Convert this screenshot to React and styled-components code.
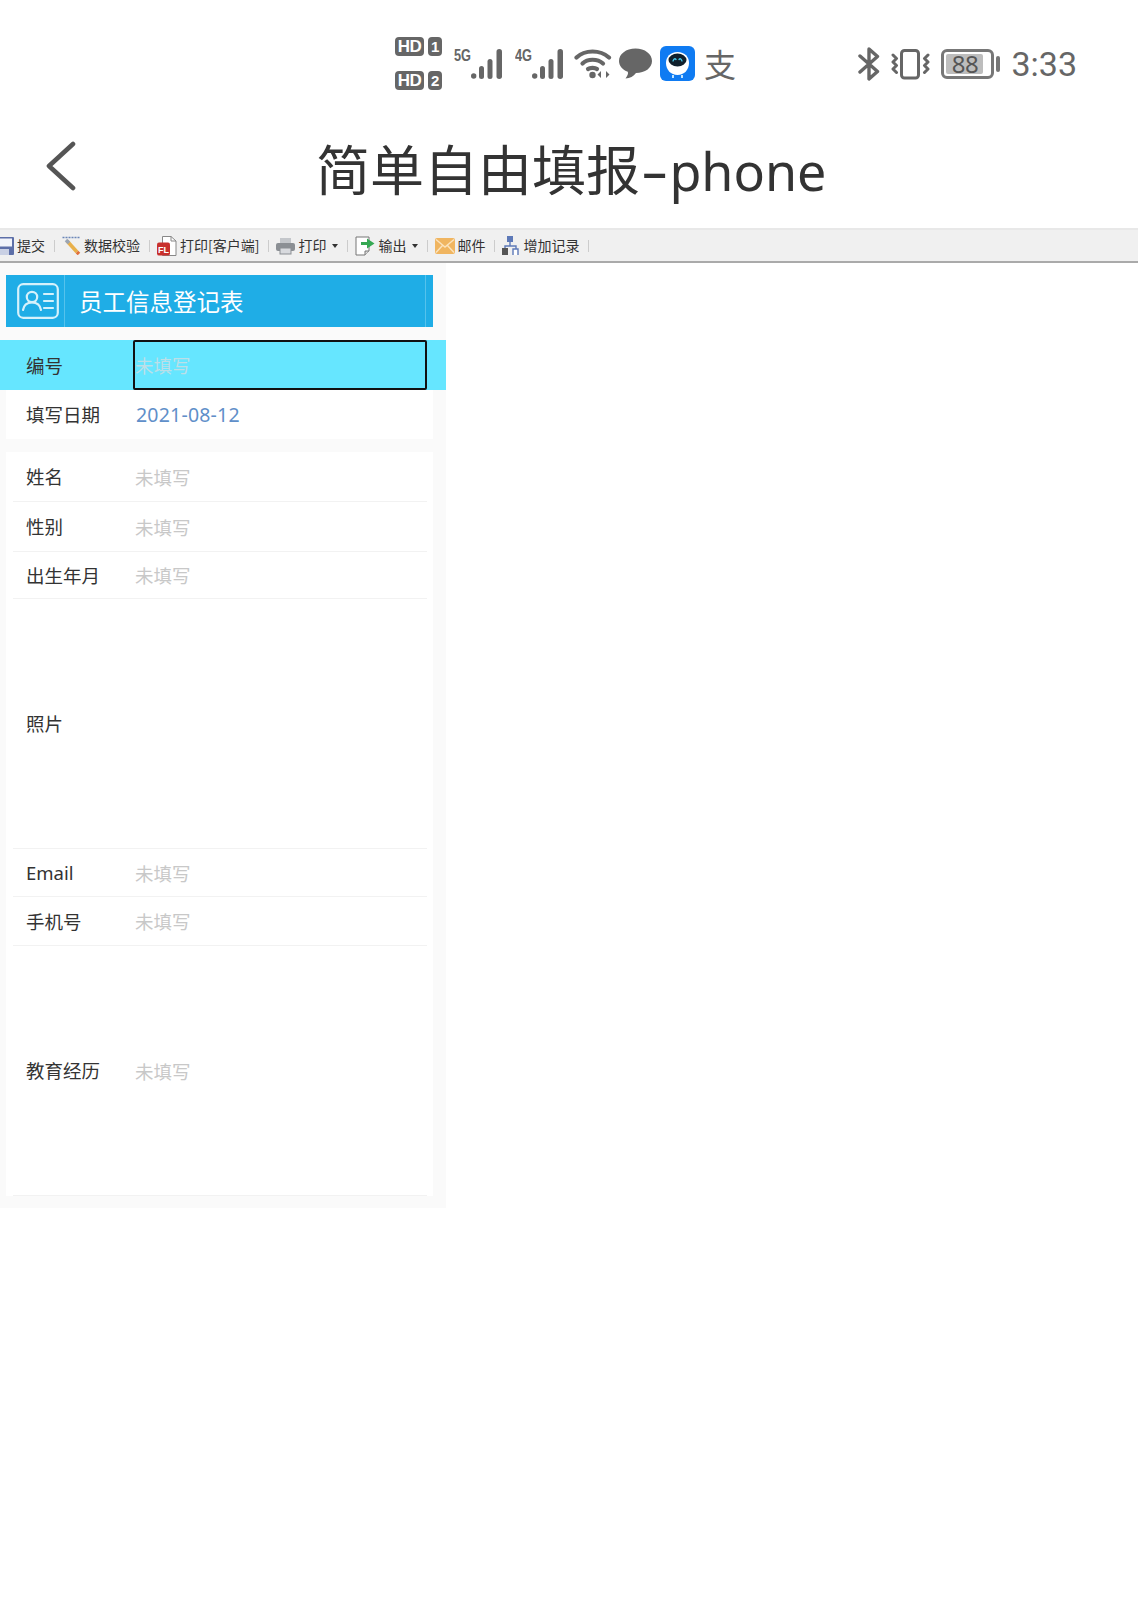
import styled, { createGlobalStyle } from 'styled-components'

const GlobalStyle = createGlobalStyle`
  html, body { margin: 0; padding: 0; background: #fff; }
  body { font-family: 'Noto Sans', 'Noto Sans CJK SC', sans-serif; }
  * { box-sizing: border-box; }
`

const Bars = () => (
  <svg width="33" height="31" viewBox="0 0 33 31" fill="#666">
    <circle cx="2.7" cy="28" r="2.7" />
    <rect x="8" y="18" width="5" height="13" rx="2.5" />
    <rect x="16.5" y="11" width="5" height="20" rx="2.5" />
    <rect x="25.5" y="1" width="5.5" height="30" rx="2.7" />
  </svg>
)

const Wifi = () => (
  <svg width="38" height="31" viewBox="0 0 38 31" fill="none" stroke="#666" strokeWidth="4.2" strokeLinecap="round">
    <path d="M2.5 9.5 C11 1.5 26 1.5 35 9.5" />
    <path d="M8.5 15.5 C13.5 10.5 23.5 10.5 29 15.5" />
    <path d="M14 21 C16 19.4 21 19.4 23 21" />
    <circle cx="18.5" cy="27" r="3.2" fill="#666" stroke="none" />
    <path d="M27 23 L27 30 L23.5 26.5 Z M32 23 L32 30 L35.5 26.5 Z" fill="#666" stroke="none" />
  </svg>
)

const Bubble = () => (
  <svg width="33" height="31" viewBox="0 0 33 31" fill="#666">
    <path d="M16.5 0.5 C26 0.5 33 6 33 13 C33 20 26 25 17 25 C14.5 28 11 30.5 6.5 30.5 C8.5 28 9.5 25.5 8.8 23.8 C3.5 21.8 0 18 0 13 C0 6 7 0.5 16.5 0.5 Z" />
  </svg>
)

const RobotApp = () => (
  <svg width="35" height="35" viewBox="0 0 35 35">
    <rect width="35" height="35" rx="6" fill="#0f7bf2" />
    <path d="M17.5 6 C25 6 29 11 29 17 C29 24 24 29 17.5 29 C11 29 6 24 6 17 C6 11 10 6 17.5 6 Z" fill="#fff" />
    <ellipse cx="17.5" cy="14" rx="9" ry="6.5" fill="#10202c" />
    <path d="M13 15 Q14.5 11.5 16 13.5 M19 13.5 Q20.5 11.5 22 15" fill="none" stroke="#46c8e8" strokeWidth="1.3" strokeLinecap="round" />
    <rect x="12" y="29" width="2" height="3" fill="#bfe3ff" />
    <rect x="21" y="29" width="2" height="3" fill="#bfe3ff" />
  </svg>
)

const Bluetooth = () => (
  <svg width="22" height="34" viewBox="0 0 22 34" fill="none" stroke="#666" strokeWidth="3.4" strokeLinejoin="round" strokeLinecap="round">
    <path d="M2 9 L19.5 24.5 L11 32 L11 2 L19.5 9.5 L2 25" />
  </svg>
)

const Vibrate = () => (
  <svg width="39" height="31" viewBox="0 0 39 31" fill="none" stroke="#666" strokeWidth="3" strokeLinecap="round" strokeLinejoin="round">
    <rect x="10.5" y="1.5" width="17" height="27.5" rx="3" />
    <path d="M2 6 L5.5 9.5 L2 13 L5.5 16.5 L2 20 L5.5 23.5" />
    <path d="M37 6 L33.5 9.5 L37 13 L33.5 16.5 L37 20 L33.5 23.5" />
  </svg>
)

const SaveIcon = () => (
  <svg width="14" height="18" viewBox="0 0 14 18">
    <rect x="-4" y="0" width="18" height="18" rx="1" fill="#5d6fa8" />
    <rect x="-2" y="1.5" width="14" height="8" fill="#f2f4fa" />
    <rect x="0" y="12" width="9" height="6" fill="#c9d0e4" />
  </svg>
)

const WandIcon = () => (
  <svg width="19" height="19" viewBox="0 0 19 19">
    <path d="M0.5 1.5 H18" stroke="#6b86b8" strokeWidth="1.6" strokeDasharray="2 1" />
    <path d="M5 5 L15 16" stroke="#e8b04a" strokeWidth="3.6" />
    <path d="M4 4 L7 7" stroke="#9aa5b5" strokeWidth="3.6" />
    <path d="M15 16 L17 18" stroke="#e0703a" strokeWidth="3.6" />
  </svg>
)

const FlIcon = () => (
  <svg width="20" height="20" viewBox="0 0 20 20">
    <path d="M5.5 0.5 H14 L19 5 V19.5 H5.5 Z" fill="#fff" stroke="#888" />
    <path d="M14 0.5 V5 H19" fill="none" stroke="#888" />
    <rect x="0" y="6.5" width="13" height="13" rx="2" fill="#c8302c" />
    <text x="6.5" y="16.5" fontSize="9" fontWeight="700" fill="#fff" textAnchor="middle" fontFamily="Liberation Sans, sans-serif">FL</text>
  </svg>
)

const PrintIcon = () => (
  <svg width="19" height="18" viewBox="0 0 19 18">
    <rect x="4" y="1" width="11" height="6" fill="#c4c7cb" />
    <rect x="0" y="6" width="19" height="8" rx="2" fill="#8b8f94" />
    <rect x="4" y="11" width="11" height="6" fill="#d8dade" stroke="#8b8f94" />
  </svg>
)

const ExportIcon = () => (
  <svg width="20" height="20" viewBox="0 0 20 20">
    <path d="M1 1 H14 V15 L10 19 H1 Z" fill="#fff" stroke="#777" />
    <path d="M10 19 V15 H14" fill="#ddd" stroke="#777" />
    <path d="M6 6 H12 V2.5 L19.5 7.5 L12 12.5 V9 H6 Z" fill="#35a853" />
  </svg>
)

const MailIcon = () => (
  <svg width="20" height="16" viewBox="0 0 20 16">
    <rect width="20" height="16" rx="2" fill="#f0b560" />
    <path d="M1 1.5 L10 9 L19 1.5 M1 14.5 L7.5 7.5 M19 14.5 L12.5 7.5" fill="none" stroke="#fbe3bd" strokeWidth="1.4" />
  </svg>
)

const NetIcon = () => (
  <svg width="17" height="19" viewBox="0 0 17 19">
    <rect x="5" y="0" width="6" height="6" fill="#5d79b8" />
    <path d="M8 6 V10 M3 13 V10 H14 V13" fill="none" stroke="#5d79b8" strokeWidth="1.4" />
    <rect x="0" y="12" width="6" height="7" fill="#555" />
    <path d="M11 19 V13 H16 V19" fill="#fff" stroke="#5d79b8" strokeWidth="1.4" />
  </svg>
)

const CardIcon = () => (
  <svg width="42" height="36" viewBox="0 0 42 36" fill="none" stroke="#d5f1fb" strokeWidth="2.2" strokeLinecap="round">
    <rect x="1.2" y="1.2" width="39.6" height="33.6" rx="5" />
    <circle cx="15" cy="14" r="5.2" />
    <path d="M6 27 C7 21 11 19.5 15 19.5 C19 19.5 23 21 24 27" />
    <path d="M27 11 H36 M27 18 H36 M27 25 H36" />
  </svg>
)

const toolbarItems = [
  { icon: <SaveIcon />, label: '提交' },
  { icon: <WandIcon />, label: '数据校验' },
  { icon: <FlIcon />, label: '打印[客户端]' },
  { icon: <PrintIcon />, label: '打印', caret: true },
  { icon: <ExportIcon />, label: '输出', caret: true },
  { icon: <MailIcon />, label: '邮件', gap: 2 },
  { icon: <NetIcon />, label: '增加记录', gap: 4 },
]

const App = () => (
  <Page>
    <GlobalStyle />
    <StatusBar>
      <SimColumn>
        <SimRow><HdBadge>HD</HdBadge><SimNum>1</SimNum></SimRow>
        <SimRow><HdBadge>HD</HdBadge><SimNum>2</SimNum></SimRow>
      </SimColumn>
      <Signal><NetType>5G</NetType><Bars /></Signal>
      <Signal><NetType>4G</NetType><Bars /></Signal>
      <Wifi />
      <Bubble />
      <RobotApp />
      <AlipayGlyph>支</AlipayGlyph>
      <StatusRight>
        <Bluetooth />
        <Vibrate />
        <Battery>
          <BatteryBody><BatteryFill>88</BatteryFill></BatteryBody>
          <BatteryNub />
        </Battery>
        <Clock>3:33</Clock>
      </StatusRight>
    </StatusBar>

    <NavBar>
      <svg width="30" height="50" viewBox="0 0 30 50" fill="none" stroke="#555" strokeWidth="4.6" strokeLinecap="round" strokeLinejoin="round">
        <path d="M27 3 L3 25 L27 47" />
      </svg>
      <NavTitle>简单自由填报<TitleDash>-</TitleDash><TitleLatin>phone</TitleLatin></NavTitle>
    </NavBar>

    <Toolbar>
      {toolbarItems.map(item => (
        <ToolGroup key={item.label + (item.caret ? 'c' : '')}>
          <ToolItem $gap={item.gap}>
            {item.icon}
            <span>{item.label}</span>
            {item.caret && <Caret />}
          </ToolItem>
          <ToolSep />
        </ToolGroup>
      ))}
    </Toolbar>

    <Form>
      <FormHeader>
        <HeaderIcon><CardIcon /></HeaderIcon>
        <HeaderTitle>员工信息登记表</HeaderTitle>
      </FormHeader>

      <Group>
        <ActiveRow>
          <ActiveLabel>编号</ActiveLabel>
          <ActiveValue>未填写</ActiveValue>
        </ActiveRow>
        <Row $height={49} $plain>
          <Label>填写日期</Label>
          <DateValue>2021-08-12</DateValue>
        </Row>
      </Group>

      <Group>
        <Row $height={50}><Label>姓名</Label><Empty>未填写</Empty></Row>
        <Row $height={50}><Label>性别</Label><Empty>未填写</Empty></Row>
        <Row $height={47}><Label>出生年月</Label><Empty>未填写</Empty></Row>
        <Row $height={250}><Label>照片</Label></Row>
        <Row $height={48}><Label>Email</Label><Empty>未填写</Empty></Row>
        <Row $height={49}><Label>手机号</Label><Empty>未填写</Empty></Row>
        <Row $height={250}><Label>教育经历</Label><Empty>未填写</Empty></Row>
      </Group>
    </Form>
  </Page>
)

const Page = styled.div`
  width: 1138px;
  min-height: 1620px;
  background: #fff;
  overflow: hidden;
`

const StatusBar = styled.div`
  height: 125px;
  padding: 37px 61px 0 395px;
  display: flex;
  align-items: flex-start;
  color: #666;

  > svg:nth-of-type(1) { margin: 11px 0 0 -2px; }
  > svg:nth-of-type(2) { margin: 11px 0 0 7px; }
  > svg:nth-of-type(3) { margin: 9px 0 0 8px; }
`

const SimColumn = styled.div`
  display: flex;
  flex-direction: column;
  gap: 15px;
  margin-right: 12px;
`

const SimRow = styled.div`
  display: flex;
  gap: 4px;
`

const HdBadge = styled.div`
  width: 29px;
  height: 19px;
  border-radius: 4px;
  background: #666;
  color: #fff;
  font: 700 17px/19px 'Liberation Sans', sans-serif;
  letter-spacing: -0.5px;
  text-align: center;
`

const SimNum = styled(HdBadge)`
  width: 14px;
  font-size: 15px;
`

const Signal = styled.div`
  display: flex;
  margin: 11px 11px 0 0;
  width: 50px;
`

const NetType = styled.div`
  width: 17px;
  font: 700 17px/15px 'Liberation Sans', sans-serif;
  transform: scaleX(0.75);
  transform-origin: left top;
`

const AlipayGlyph = styled.div`
  margin: 8px 0 0 9px;
  font: 400 32px/36px 'Noto Sans CJK SC', sans-serif;
  color: #666;
`

const StatusRight = styled.div`
  margin-left: auto;
  display: flex;
  align-items: center;
  gap: 11px;
  height: 54px;
`

const Battery = styled.div`
  display: flex;
  align-items: center;
  gap: 2px;
`

const BatteryBody = styled.div`
  width: 53px;
  height: 30px;
  border: 3px solid #777;
  border-radius: 6px;
  padding: 2px;
`

const BatteryFill = styled.div`
  width: 37px;
  height: 100%;
  background: #bdbdbd;
  border-radius: 2px;
  font: 400 24px/20px 'Noto Sans', sans-serif;
  letter-spacing: -0.5px;
  text-align: center;
  color: #555;
`

const BatteryNub = styled.div`
  width: 4px;
  height: 16px;
  background: #777;
  border-radius: 2px;
`

const Clock = styled.div`
  font: 400 34px/54px Roboto, sans-serif;
  color: #666;
`

const NavBar = styled.div`
  height: 103px;
  padding: 16px 0 0 46px;
  display: flex;
  align-items: flex-start;
`

const NavTitle = styled.h1`
  margin: -9px 0 0 240px;
  font: 400 54px/76px 'Noto Sans', 'Noto Sans CJK SC', sans-serif;
  color: #333;
  white-space: nowrap;
`

const TitleDash = styled.span`
  display: inline-block;
  margin: 0 6px;
  transform: scaleX(1.6);
`

const TitleLatin = styled.span`
  font-size: 52px;
`

const Toolbar = styled.div`
  height: 35px;
  background: #f0f0f0;
  border-top: 2px solid #e8e8e8;
  border-bottom: 2px solid #aaa;
  display: flex;
  align-items: center;
`

const ToolGroup = styled.div`
  display: flex;
  align-items: center;
`

const ToolItem = styled.div`
  display: flex;
  align-items: center;
  gap: ${p => p.$gap || 3}px;
  font: 400 14px/20px 'Noto Sans CJK SC', sans-serif;
  color: #333;
  white-space: nowrap;

  > span { margin-top: -2px; }
`

const Caret = styled.i`
  width: 0;
  height: 0;
  margin-left: 3px;
  border-left: 3.5px solid transparent;
  border-right: 3.5px solid transparent;
  border-top: 4px solid #333;
`

const ToolSep = styled.div`
  width: 1px;
  height: 12px;
  margin: 0 7px 0 9px;
  background: #ccc;
`

const Form = styled.div`
  width: 446px;
  height: 945px;
  padding: 12px 13px 0 6px;
  background: #fafafa;
`

const FormHeader = styled.div`
  height: 52px;
  background: #1fade6;
  display: flex;
  align-items: stretch;
  border-right: 7px solid #1fade6;
`

const HeaderIcon = styled.div`
  width: 59px;
  padding-left: 11px;
  display: flex;
  align-items: center;
  border-right: 1px solid #55c2ec;
`

const HeaderTitle = styled.div`
  flex: 1;
  padding-left: 14px;
  font: 400 23.5px/52px 'Noto Sans CJK SC', sans-serif;
  color: #fff;
  border-right: 1px solid #55c2ec;
`

const Group = styled.div`
  margin-top: 13px;
  background: #fff;
`

const ActiveRow = styled.div`
  height: 50px;
  margin: 0 -13px 0 -6px;
  padding: 0 19px 0 6px;
  background: #66e6ff;
  display: flex;
`

const ActiveLabel = styled.div`
  width: 127px;
  padding-left: 20px;
  font: 400 18.5px/50px 'Noto Sans CJK SC', sans-serif;
  color: #333;
`

const ActiveValue = styled.div`
  flex: 1;
  border: 2px solid #111;
  border-radius: 2px;
  font: 400 18.5px/46px 'Noto Sans CJK SC', sans-serif;
  color: #bcdfe8;
`

const Row = styled.div`
  height: ${p => p.$height}px;
  margin: 0 6px 0 7px;
  display: flex;
  align-items: center;
  border-bottom: ${p => (p.$plain ? 'none' : '1px solid #f2f2f2')};
`

const Label = styled.div`
  width: 122px;
  margin-top: 1px;
  padding-left: 13px;
  font: 400 18.5px/24px 'Noto Sans', 'Noto Sans CJK SC', sans-serif;
  color: #333;
  flex-shrink: 0;
`

const Empty = styled.div`
  font: 400 18.5px/24px 'Noto Sans CJK SC', sans-serif;
  color: #c8c8c8;
`

const DateValue = styled.div`
  margin-left: 1px;
  font: 400 19.5px/24px 'Noto Sans', sans-serif;
  letter-spacing: 0.2px;
  color: #5f8fc9;
`

export default App
